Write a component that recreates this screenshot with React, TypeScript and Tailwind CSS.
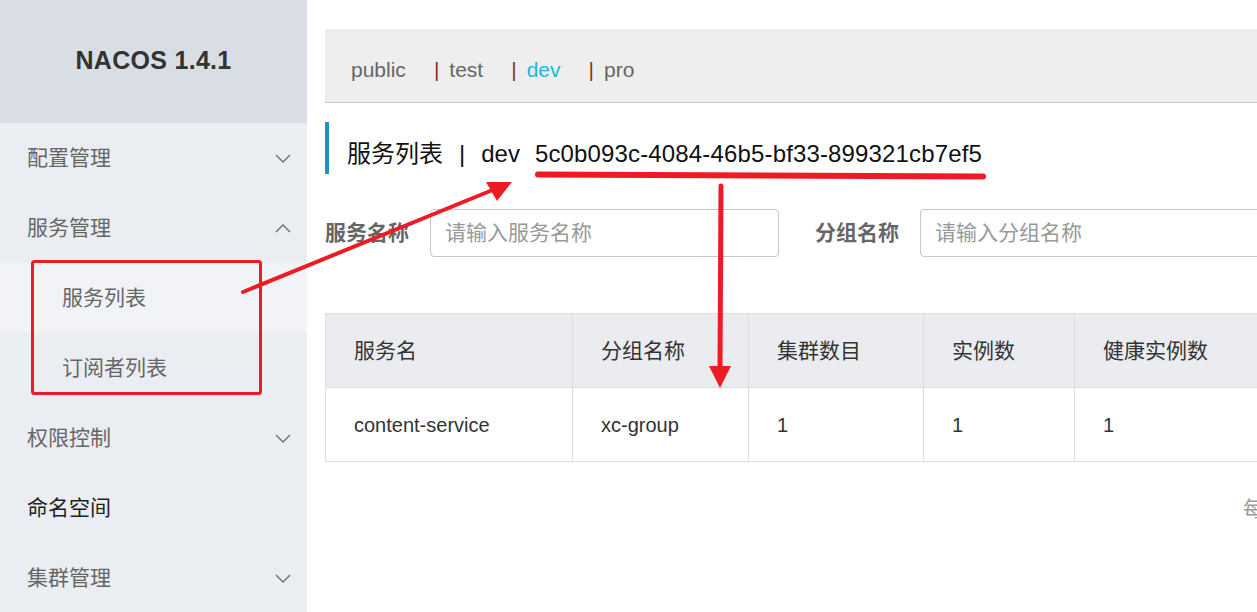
import React from "react"

const font = "font-['Liberation_Sans','Noto_Sans_CJK_SC',sans-serif]"

const Chevron = ({ up }: { up?: boolean }) => (
    <svg width="16" height="9" viewBox="0 0 16 9" className="shrink-0">
        <polyline
            points={up ? "1,8 8,1 15,8" : "1,1 8,8 15,1"}
            fill="none"
            stroke="#6b6b6b"
            strokeWidth="1.3"
        />
    </svg>
)

type NavItem = { label: string; sub?: boolean; chevron?: "up" | "down"; active?: boolean; dark?: boolean }

const navItems: NavItem[] = [
    { label: "配置管理", chevron: "down" },
    { label: "服务管理", chevron: "up" },
    { label: "服务列表", sub: true, active: true },
    { label: "订阅者列表", sub: true },
    { label: "权限控制", chevron: "down" },
    { label: "命名空间", dark: true },
    { label: "集群管理", chevron: "down" },
]

const columns = [
    { title: "服务名", w: "w-[246px]", value: "content-service" },
    { title: "分组名称", w: "w-[176px]", value: "xc-group" },
    { title: "集群数目", w: "w-[175px]", value: "1" },
    { title: "实例数", w: "w-[151px]", value: "1" },
    { title: "健康实例数", w: "w-[200px]", value: "1" },
]

const Sidebar = () => (
    <aside className="w-[307px] shrink-0 bg-[#eaedf1] flex flex-col">
        <div className="h-[123px] shrink-0 bg-[#d9dee4] flex items-center justify-center pb-[2px]">
            <span className="text-[25px] font-bold text-[#333] tracking-[0.3px]">NACOS 1.4.1</span>
        </div>
        {navItems.map((item) => (
            <div
                key={item.label}
                className={
                    "h-[70px] shrink-0 flex items-center justify-between pr-[16px] text-[21px] " +
                    (item.sub ? "pl-[62px] " : "pl-[27px] ") +
                    (item.active ? "bg-[#f2f3f7] " : "") +
                    (item.dark ? "text-[#222]" : "text-[#666]")
                }
            >
                <span>{item.label}</span>
                {item.chevron && <Chevron up={item.chevron === "up"} />}
            </div>
        ))}
    </aside>
)

const NamespaceBar = () => {
    const spaces = ["test", "dev", "pro"]
    return (
        <div className="h-[74px] bg-[#eeeeee] border-b border-[#cccccc] flex items-center pl-[26px] pt-[8px] text-[21px] text-[#666]">
            <span className="mr-[28px]">public</span>
            {spaces.map((s) => (
                <span key={s} className="flex items-center mr-[28px]">
                    <span className="text-[#7b3a1a] mr-[10px]">|</span>
                    <span className={s === "dev" ? "text-[#25b3df]" : ""}>{s}</span>
                </span>
            ))}
        </div>
    )
}

const SearchField = ({ label, placeholder }: { label: string; placeholder: string }) => (
    <div className="flex items-center shrink-0">
        <span className="text-[21px] font-bold text-[#666] w-[105px]">{label}</span>
        <div className="w-[349px] h-[48px] border border-[#c4c6cf] rounded-[4px] flex items-center px-[14px] text-[21px] text-[#999]">
            {placeholder}
        </div>
    </div>
)

const ServiceTable = () => (
    <div className="mt-[56px] border border-[#dcdee3] w-max">
        <div className="flex bg-[#ebecf0] h-[74px] border-b border-[#dcdee3]">
            {columns.map((c, i) => (
                <div
                    key={c.title}
                    className={`${c.w} flex items-center pl-[28px] text-[21px] text-[#333] ${i > 0 ? "border-l border-[#dcdee3]" : ""}`}
                >
                    {c.title}
                </div>
            ))}
        </div>
        <div className="flex h-[73px] bg-white">
            {columns.map((c, i) => (
                <div
                    key={c.title}
                    className={`${c.w} flex items-center pl-[28px] text-[20px] text-[#333] ${i > 0 ? "border-l border-[#dcdee3]" : ""}`}
                >
                    {c.value}
                </div>
            ))}
        </div>
    </div>
)

const Annotations = () => (
    <svg className="absolute inset-0 pointer-events-none" width="1257" height="612" viewBox="0 0 1257 612">
        <rect x="32.5" y="261.5" width="228" height="132" rx="2" fill="none" stroke="#ed1c24" strokeWidth="3" />
        <line x1="243" y1="292" x2="495" y2="189" stroke="#ed1c24" strokeWidth="4" strokeLinecap="round" />
        <polygon points="512,182 486,182 497,201" fill="#ed1c24" />
        <line x1="538" y1="174.5" x2="983" y2="176.5" stroke="#ed1c24" strokeWidth="6" strokeLinecap="round" />
        <line x1="721" y1="186" x2="720" y2="370" stroke="#ed1c24" strokeWidth="5" strokeLinecap="round" />
        <polygon points="709,366 731,366 720,388" fill="#ed1c24" />
    </svg>
)

export default function App() {
    return (
        <div className={`relative w-[1257px] h-[612px] overflow-hidden flex bg-white ${font}`}>
            <Sidebar />
            <main className="flex-1 min-w-0 pl-[18px] pt-[29px] flex flex-col">
                <NamespaceBar />
                <div className="mt-[19px] h-[52px] border-l-[4px] border-[#1795c8] pl-[18px] pt-[12px] flex items-center text-[24px] text-[#111]">
                    <span>服务列表</span>
                    <span className="mx-[16px]">|</span>
                    <span>dev</span>
                    <span className="ml-[15px] tracking-[0.15px]">5c0b093c-4084-46b5-bf33-899321cb7ef5</span>
                </div>
                <div className="mt-[35px] flex items-center gap-[36px]">
                    <SearchField label="服务名称" placeholder="请输入服务名称" />
                    <SearchField label="分组名称" placeholder="请输入分组名称" />
                </div>
                <ServiceTable />
                <div className="mt-[31px] pl-[918px] text-[21px] text-[#999] whitespace-nowrap">每</div>
            </main>
            <Annotations />
        </div>
    )
}
